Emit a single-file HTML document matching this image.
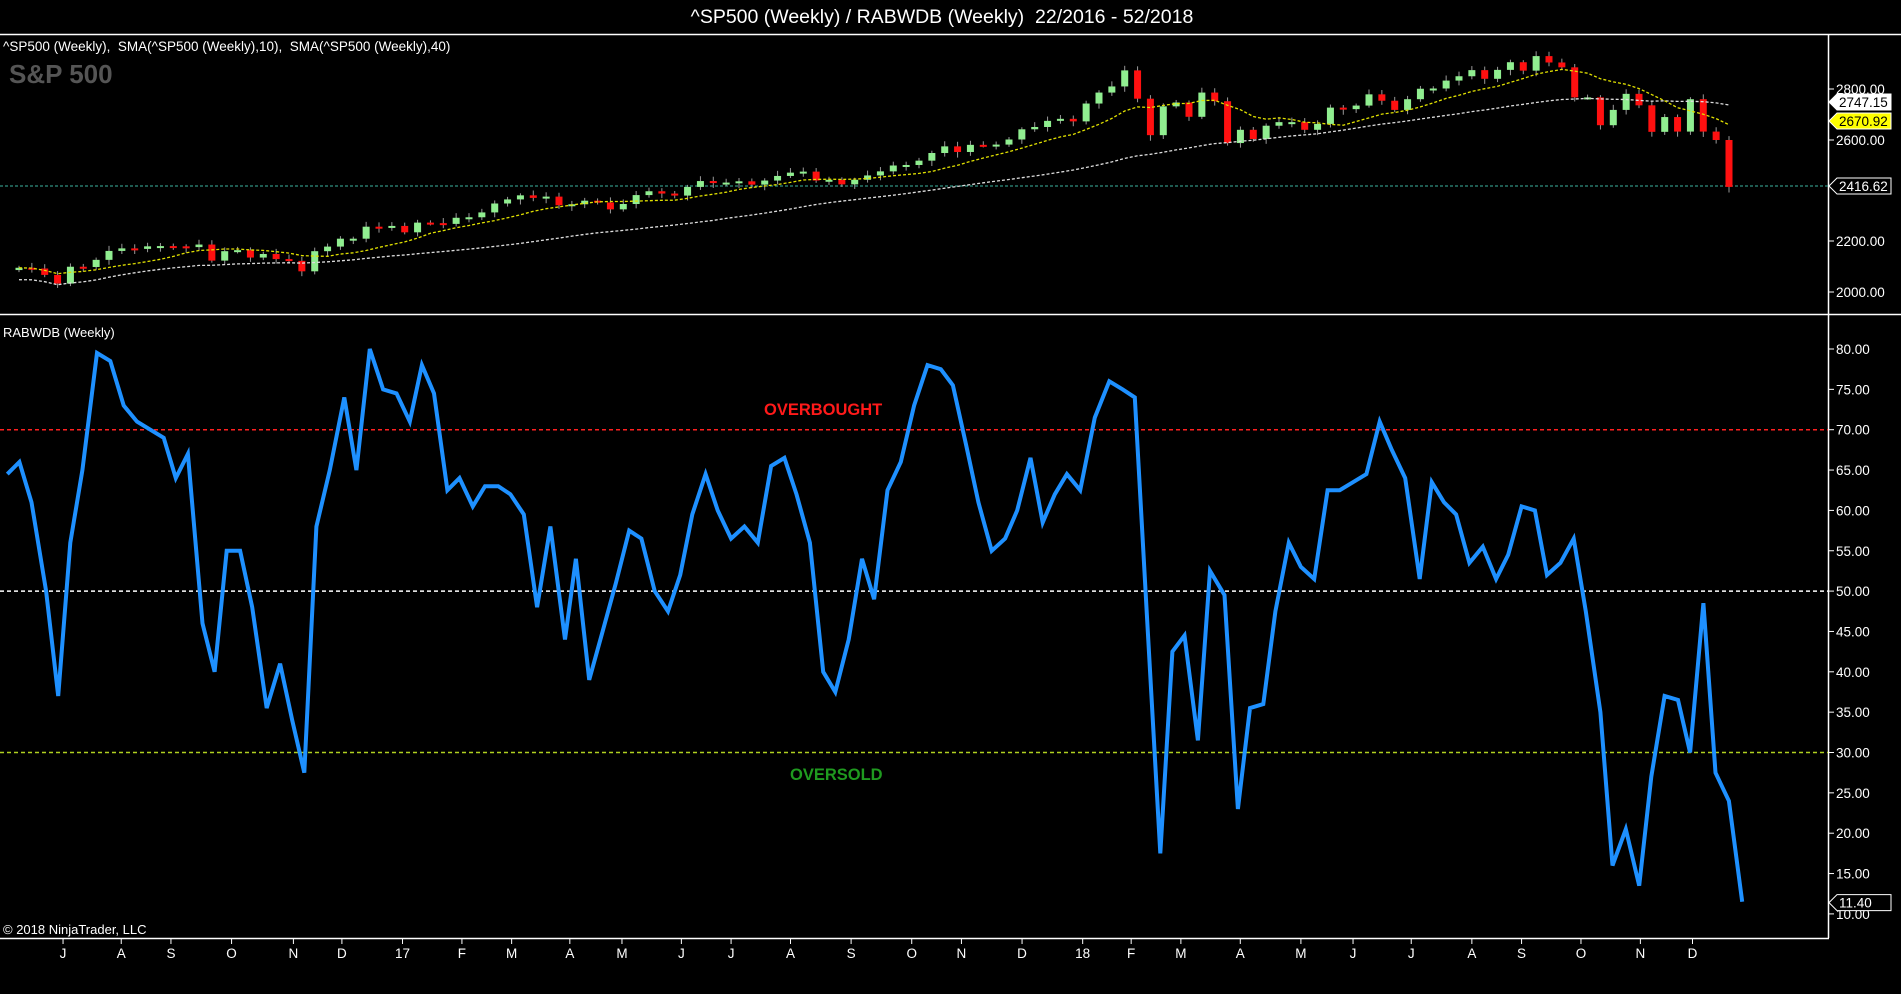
<!DOCTYPE html>
<html><head><meta charset="utf-8">
<style>
html,body{margin:0;padding:0;background:#000;width:1901px;height:994px;overflow:hidden}
svg{display:block}
text{font-family:"Liberation Sans",sans-serif}
</style></head>
<body>
<svg id="s" width="1901" height="994" xmlns="http://www.w3.org/2000/svg">
<rect width="1901" height="994" fill="#000"/>
<text x="942" y="23" fill="#fff" font-size="19.5" text-anchor="middle" xml:space="preserve">^SP500 (Weekly) / RABWDB (Weekly)  22/2016 - 52/2018</text>
<line x1="0" y1="34.5" x2="1901" y2="34.5" stroke="#fff" stroke-width="1.5"/>
<line x1="0" y1="314.5" x2="1901" y2="314.5" stroke="#fff" stroke-width="1.5"/>
<line x1="0" y1="938.5" x2="1829" y2="938.5" stroke="#fff" stroke-width="1.5"/>
<line x1="1828.5" y1="34" x2="1828.5" y2="938" stroke="#fff" stroke-width="1.5"/>
<text x="3" y="51" fill="#fff" font-size="13.5" xml:space="preserve">^SP500 (Weekly),  SMA(^SP500 (Weekly),10),  SMA(^SP500 (Weekly),40)</text>
<text x="9" y="83" fill="#555" font-size="26" font-weight="bold">S&amp;P 500</text>
<text x="3" y="337" fill="#fff" font-size="13">RABWDB (Weekly)</text>
<text x="3" y="934" fill="#fff" font-size="13">© 2018 NinjaTrader, LLC</text>
<line x1="0" y1="186" x2="1828" y2="186" stroke="#3cb3a0" stroke-width="1" stroke-dasharray="3,2"/>
<g id="g"></g>
</svg>
<script>
var NS="http://www.w3.org/2000/svg",g=document.getElementById('g');
function el(t,a,txt){var e=document.createElementNS(NS,t);for(var k in a)e.setAttribute(k,a[k]);if(txt!=null)e.textContent=txt;g.appendChild(e);return e;}
var c=[2099,2096,2071,2037,2103,2102,2130,2165,2175,2173,2183,2184,2183,2180,2190,2127,2164,2168,2139,2153,2133,2126,2085,2164,2182,2213,2213,2260,2259,2263,2238,
2276,2274,2271,2295,2297,2316,2351,2367,2383,2373,2378,2344,2348,2362,2355,2328,2349,2384,2399,2390,2382,2416,2439,2432,2433,2438,2425,2441,2459,2472,2476,2441,2444,2426,2444,2461,2477,2500,2502,2519,2549,2575,2553,2581,2579,2582,2602,2642,2651,2675,2683,2673,
2743,2786,2810,2873,2762,2619,2732,2747,2691,2786,2752,2588,2640,2604,2656,2670,2670,2640,2663,2727,2721,2735,2779,2754,2718,2760,2801,2802,2833,2850,2874,2840,2875,2905,2872,2929,2904,2885,2767,2767,2658,2718,2781,2736,2632,2690,2633,2760,2633,2600,2416];
var n=c.length,x0=19,x1=1729,dx=(x1-x0)/(n-1);
function py(p){return 89+(2800-p)*51/200;}
var s10="",s40="";
for(var i=0;i<n;i++){
 var o=i?c[i-1]:2090,cl=c[i],x=x0+i*dx;
 var hi=Math.max(o,cl)+8+((i*37)%13),lo=Math.min(o,cl)-8-((i*53)%15);
 var up=cl>=o,col=up?"#90ee90":"#ff1010";
 el('line',{x1:x,y1:py(hi),x2:x,y2:py(lo),stroke:"#999","stroke-width":1});
 var t=py(Math.max(o,cl)),b=py(Math.min(o,cl));if(b-t<2){b=t+2;}
 el('rect',{x:x-3.5,y:t,width:7,height:b-t,fill:col});
 var a=0,k=0;for(var j=Math.max(0,i-9);j<=i;j++){a+=c[j];k++;}a/=k;
 var a4=0,k4=0;for(var j=Math.max(0,i-39);j<=i;j++){a4+=c[j];k4++;}a4/=k4;a4-=Math.max(0,(40-k4))*1.2;
 s10+=(i?"L":"M")+x.toFixed(1)+","+py(a).toFixed(1);
 s40+=(i?"L":"M")+x.toFixed(1)+","+py(a4).toFixed(1);
}
el('path',{d:s40,fill:"none",stroke:"#ddd","stroke-width":1.3,"stroke-dasharray":"3,2"});
el('path',{d:s10,fill:"none",stroke:"#e0e000","stroke-width":1.3,"stroke-dasharray":"3,2"});
[[2800,89],[2600,140],[2200,241],[2000,292]].forEach(function(v){
 el('line',{x1:1828,y1:v[1],x2:1834,y2:v[1],stroke:"#fff"});
 el('text',{x:1836,y:v[1]+5,fill:"#fff","font-size":13.5},v[0].toFixed(2));
});
function tag(y,txt,bg,fg){
 el('path',{d:"M1829,"+y+" L1837,"+(y-8)+" L1891,"+(y-8)+" L1891,"+(y+8)+" L1837,"+(y+8)+" Z",fill:bg,stroke:"#fff","stroke-width":1});
 el('text',{x:1839,y:y+5,fill:fg,"font-size":13.5},txt);
}
tag(186,"2416.62","#000","#fff");
tag(102,"2747.15","#fff","#000");
tag(121,"2670.92","#ffff00","#000");
function ry(v){return 349+(80-v)*8.07;}
for(var v=80;v>=10;v-=5){var y=ry(v);
 el('line',{x1:1828,y1:y,x2:1834,y2:y,stroke:"#fff"});
 el('text',{x:1836,y:y+5,fill:"#fff","font-size":13.5},v.toFixed(2));}
el('line',{x1:0,y1:ry(70),x2:1828,y2:ry(70),stroke:"#ff2020","stroke-width":1.5,"stroke-dasharray":"4,3"});
el('line',{x1:0,y1:ry(50),x2:1828,y2:ry(50),stroke:"#fff","stroke-width":1.5,"stroke-dasharray":"4,3"});
el('line',{x1:0,y1:ry(30),x2:1828,y2:ry(30),stroke:"#b0d020","stroke-width":1.5,"stroke-dasharray":"4,3"});
el('text',{x:764,y:415,fill:"#ff1a1a","font-size":16.5,"font-weight":"bold"},"OVERBOUGHT");
el('text',{x:790,y:780,fill:"#1f9a1f","font-size":16.5,"font-weight":"bold"},"OVERSOLD");
var d=[6,64.5,16,66,26,61,38,50,48,37,58,56,68,65,80,79.5,91,78.5,102,73,113,71,124,70,135,69,145,64,155,67,167,46,177,40,187,55,198,55,208,48,220,35.5,231,41,241,34,251,27.5,261,58,272,65,284,74,294,65,305,80,316,75,327,74.5,338,71,348,78,358,74.5,369,62.5,379,64,390,60.5,400,63,411,63,421,62,432,59.5,443,48,454,58,466,44,475,54,486,39,497,45,508,51,519,57.5,529,56.5,540,50,551,47.5,561,52,571,59.5,582,64.5,592,60,603,56.5,614,58,625,56,636,65.5,647,66.5,657,62,668,56,679,40,689,37.5,700,44,711,54,721,49,732,62.5,743,66,754,73,765,78,776,77.5,786,75.5,797,68,807,61,818,55,829,56.5,839,60,850,66.5,860,58.5,870,62,880,64.5,891,62.5,903,71.5,915,76,926,75,936,74,946,47,957,17.5,967,42.5,977,44.5,988,31.5,998,52.5,1010,49.5,1021,23,1031,35.5,1042,36,1052,47.5,1063,56,1073,53,1084,51.5,1095,62.5,1105,62.5,1116,63.5,1127,64.5,1138,71,1148,67.5,1159,64,1171,51.5,1181,63.5,1191,61,1201,59.5,1212,53.5,1223,55.5,1234,51.5,1244,54.5,1255,60.5,1266,60,1276,52,1287,53.5,1298,56.5,1308,47.5,1320,35,1330,16,1341,20.5,1352,13.5,1362,27,1373,37,1384,36.5,1394,30,1405,48.5,1415,27.5,1426,24,1437,11.5];
var p="";for(var i=0;i<d.length;i+=2){p+=(i?"L":"M")+(d[i]*1.2124).toFixed(1)+","+ry(d[i+1]).toFixed(1);}
el('path',{d:p,fill:"none",stroke:"#1e90ff","stroke-width":4,"stroke-linejoin":"miter"});
tag(ry(11.4),"11.40","#000","#fff");
var m=[["J",52],["A",100],["S",141],["O",191],["N",242],["D",282],["17",332],["F",381],["M",422],["A",470],["M",513],["J",562],["J",603],["A",652],["S",702],["O",752],["N",793],["D",843],["18",893],["F",933],["M",974],["A",1023],["M",1073],["J",1116],["J",1164],["A",1214],["S",1255],["O",1304],["N",1353],["D",1396]];
m.forEach(function(q){var x=q[1]*1.2124;
 el('line',{x1:x,y1:938,x2:x,y2:944,stroke:"#fff"});
 el('text',{x:x,y:958,fill:"#fff","font-size":13.5,"text-anchor":"middle"},q[0]);});
</script>
</body></html>
